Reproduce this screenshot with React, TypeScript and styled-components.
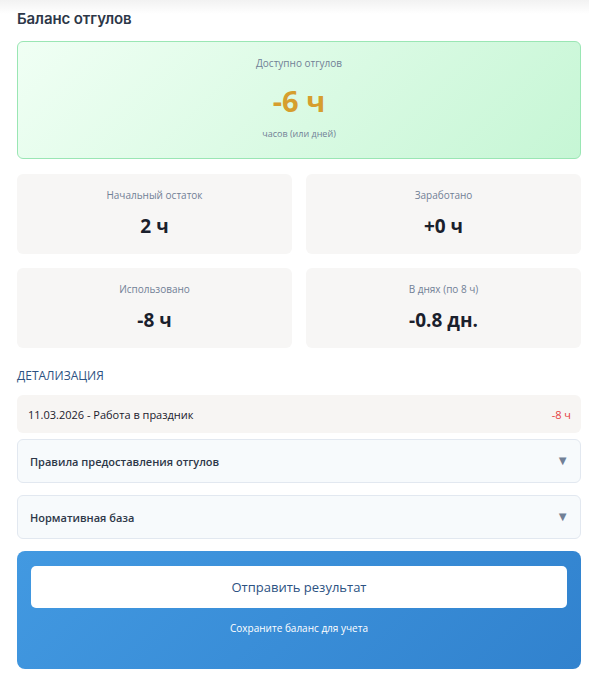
import React from "react";
import styled, { createGlobalStyle } from "styled-components";

const Global = createGlobalStyle`
  html, body { margin: 0; padding: 0; }
  body {
    background: linear-gradient(180deg, #f2f2f2 0px, #ffffff 14px) no-repeat;
    background-color: #ffffff;
    font-family: "Open Sans", "Noto Sans", sans-serif;
    color: #2d3748;
  }
  * { box-sizing: border-box; }
`;

const Page = styled.div`
  padding: 9px 8px 24px 17px;
  width: 589px;
  display: flex;
  flex-direction: column;
`;

const Title = styled.h2`
  margin: 0 0 12px 0;
  font-family: "Inter", "Noto Sans", sans-serif;
  font-size: 15px;
  font-weight: 600;
  line-height: 20px;
  color: #2d3748;
  letter-spacing: -0.1px;
`;

const MainCard = styled.div`
  border: 1px solid #9ae6b4;
  border-radius: 6px;
  background: linear-gradient(135deg, #f0fff4 0%, #c6f6d5 100%);
  height: 118px;
  display: flex;
  flex-direction: column;
  align-items: center;
  padding-top: 13px;
`;

const SmallLabel = styled.div`
  font-size: 10px;
  color: #718096;
  line-height: 16px;
`;

const BigValue = styled.div`
  font-size: 29px;
  font-weight: 700;
  color: #d69e2e;
  line-height: 36px;
  margin-top: 12px;
`;

const SubLabel = styled.div`
  font-size: 9px;
  color: #718096;
  line-height: 14px;
  margin-top: 8px;
`;

const Grid = styled.div`
  display: grid;
  grid-template-columns: 1fr 1fr;
  column-gap: 14px;
  row-gap: 14px;
  margin-top: 15px;
`;

const StatCard = styled.div`
  background: #f7f6f5;
  border-radius: 6px;
  height: 80px;
  display: flex;
  flex-direction: column;
  align-items: center;
  padding-top: 13px;
`;

const StatLabel = styled.div`
  font-size: 10px;
  color: #718096;
  line-height: 16px;
`;

const StatValue = styled.div`
  font-size: 19px;
  font-weight: 700;
  color: #1a202c;
  line-height: 24px;
  margin-top: 11px;
`;

const SectionTitle = styled.div`
  margin-top: 20px;
  font-size: 12px;
  color: #2c5282;
  line-height: 16px;
  text-transform: uppercase;
`;

const DetailRow = styled.div`
  margin-top: 11px;
  background: #f7f5f3;
  border-radius: 6px;
  height: 38px;
  display: flex;
  align-items: center;
  justify-content: space-between;
  padding: 0 10px 0 11px;
  font-size: 11px;
  color: #1a202c;
`;

const DetailValue = styled.span`
  color: #e53e3e;
`;

const Accordion = styled.div<{ $gap: number }>`
  margin-top: ${(p) => p.$gap}px;
  background: #f7fafc;
  border: 1px solid #e2e8f0;
  border-radius: 6px;
  height: 44px;
  display: flex;
  align-items: center;
  justify-content: space-between;
  padding: 0 11px 0 12px;
`;

const AccTitle = styled.span`
  font-size: 11px;
  font-weight: 600;
  color: #2d3748;
`;

const Arrow = styled.span`
  font-size: 13px;
  color: #718096;
  margin-top: -3px;
`;

const SubmitBox = styled.div`
  margin-top: 12px;
  border-radius: 8px;
  background: linear-gradient(135deg, #4299e1 0%, #3182ce 100%);
  height: 118px;
  padding: 15px 14px 0 14px;
  display: flex;
  flex-direction: column;
  align-items: stretch;
`;

const SubmitButton = styled.button`
  height: 42px;
  border: none;
  border-radius: 5px;
  background: #ffffff;
  color: #2c5282;
  font-family: "Open Sans", "Noto Sans", sans-serif;
  font-size: 13px;
  font-weight: 500;
  cursor: pointer;
`;

const SubmitHint = styled.div`
  margin-top: 12px;
  text-align: center;
  font-size: 10px;
  color: #ffffff;
  line-height: 16px;
`;

const stats = [
  { label: "Начальный остаток", value: "2 ч" },
  { label: "Заработано", value: "+0 ч" },
  { label: "Использовано", value: "-8 ч" },
  { label: "В днях (по 8 ч)", value: "-0.8 дн." },
];

export default function App() {
  return (
    <>
      <Global />
      <Page>
        <Title>Баланс отгулов</Title>
        <MainCard>
          <SmallLabel>Доступно отгулов</SmallLabel>
          <BigValue>-6 ч</BigValue>
          <SubLabel>часов (или дней)</SubLabel>
        </MainCard>
        <Grid>
          {stats.map((s) => (
            <StatCard key={s.label}>
              <StatLabel>{s.label}</StatLabel>
              <StatValue>{s.value}</StatValue>
            </StatCard>
          ))}
        </Grid>
        <SectionTitle>Детализация</SectionTitle>
        <DetailRow>
          <span>11.03.2026 - Работа в праздник</span>
          <DetailValue>-8 ч</DetailValue>
        </DetailRow>
        <Accordion $gap={6}>
          <AccTitle>Правила предоставления отгулов</AccTitle>
          <Arrow>▼</Arrow>
        </Accordion>
        <Accordion $gap={12}>
          <AccTitle>Нормативная база</AccTitle>
          <Arrow>▼</Arrow>
        </Accordion>
        <SubmitBox>
          <SubmitButton>Отправить результат</SubmitButton>
          <SubmitHint>Сохраните баланс для учета</SubmitHint>
        </SubmitBox>
      </Page>
    </>
  );
}
